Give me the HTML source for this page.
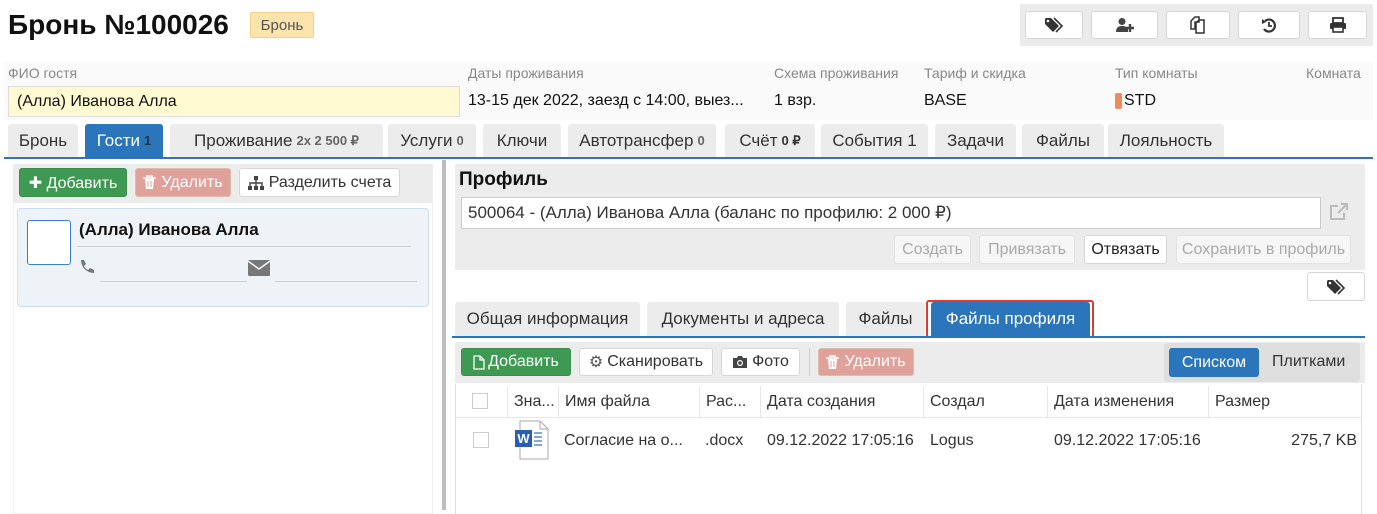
<!DOCTYPE html>
<html><head><meta charset="utf-8"><style>
*{box-sizing:border-box;margin:0;padding:0}
body{width:1377px;height:507px;overflow:hidden;background:#fff;font-family:"Liberation Sans Narrow","Liberation Sans",sans-serif;font-size:16px;color:#222;position:relative}
.a{position:absolute;white-space:nowrap;overflow:hidden}
.btn{position:absolute;border:1px solid #d6d6d6;border-radius:3px;background:#fff;display:flex;align-items:center;justify-content:center;white-space:nowrap;overflow:hidden;font-size:16px;color:#333}
.tab{position:absolute;background:#ececec;border-radius:3px 3px 0 0;display:flex;align-items:center;justify-content:center;white-space:nowrap;color:#333;font-size:17px}
.tab b{font-size:13px;color:#666;margin-left:4px}
.lbl{position:absolute;font-size:14px;color:#888;white-space:nowrap}
.val{position:absolute;font-size:16px;color:#111;white-space:nowrap}
.dis{background:#f6f6f6;color:#aaa;border-color:#e2e2e2}
.th{position:absolute;top:386px;height:32px;border-left:1px solid #e6e6e6;padding-left:6px;line-height:32px;font-size:16px;color:#333;white-space:nowrap;overflow:hidden}
.td{position:absolute;top:428px;font-size:16px;color:#333;white-space:nowrap;line-height:26px}
</style></head><body>

<div class="a" style="left:8px;top:6px;font-family:'Liberation Sans',sans-serif;font-weight:bold;font-size:28px;color:#111;line-height:38px">Бронь №100026</div>
<div class="a" style="left:250px;top:12px;width:64px;height:26px;background:#fde4ad;border:1px solid #f4cf8a;border-radius:2px;font-size:15px;color:#555;display:flex;align-items:center;justify-content:center">Бронь</div>

<div class="a" style="left:1020px;top:4px;width:353px;height:42px;background:#ebebeb;border-radius:2px"></div>
<div class="btn" style="left:1025px;top:11px;width:58px;height:28px"><svg width="20" height="16" viewBox="0 0 20 16"><path d="M1 2v5l8 8 6-6-8-8H2z" fill="#333"/><circle cx="4" cy="4" r="1.3" fill="#fff"/><path d="M10 1l8 8-6 6" fill="none" stroke="#333" stroke-width="1.6"/></svg></div>
<div class="btn" style="left:1091px;top:11px;width:67px;height:28px"><svg width="20" height="16" viewBox="0 0 20 16"><circle cx="7" cy="4.5" r="3.5" fill="#444"/><path d="M1 15c0-5 3-6 6-6s5 1 6 3v3z" fill="#444"/><path d="M15 7v8M11 11h8" stroke="#444" stroke-width="2.4"/></svg></div>
<div class="btn" style="left:1166px;top:11px;width:64px;height:28px"><svg width="16" height="18" viewBox="0 0 16 18"><path d="M1 5l4-4h4v5H5v7H1z M6 7l3-3h5v13H6z" fill="none" stroke="#333" stroke-width="1.5"/></svg></div>
<div class="btn" style="left:1238px;top:11px;width:62px;height:28px"><svg width="16" height="16" viewBox="0 0 16 16"><path d="M4 4a6 6 0 1 1-1 8" fill="none" stroke="#333" stroke-width="2.2"/><path d="M1 2l4 3-4 2z" fill="#333"/><path d="M8 5v4h3" fill="none" stroke="#333" stroke-width="1.8"/></svg></div>
<div class="btn" style="left:1308px;top:11px;width:59px;height:28px"><svg width="18" height="16" viewBox="0 0 18 16"><rect x="4" y="1" width="10" height="5" fill="none" stroke="#333" stroke-width="1.8"/><rect x="1" y="6" width="16" height="6" rx="1" fill="#333"/><rect x="4" y="10" width="10" height="5" fill="#fff" stroke="#333" stroke-width="1.6"/></svg></div>

<div class="a" style="left:4px;top:62px;width:1369px;height:58px;background:#fafafa"></div>
<div class="lbl" style="left:8px;top:65px">ФИО гостя</div>
<div class="lbl" style="left:468px;top:65px">Даты проживания</div>
<div class="lbl" style="left:774px;top:65px">Схема проживания</div>
<div class="lbl" style="left:924px;top:65px">Тариф и скидка</div>
<div class="lbl" style="left:1115px;top:65px">Тип комнаты</div>
<div class="lbl" style="left:1306px;top:65px">Комната</div>
<div class="a" style="left:8px;top:86px;width:452px;height:31px;background:#fffad1;border:1px solid #ddd;padding-left:8px;line-height:30px;font-size:16px;color:#111">(Алла) Иванова Алла</div>
<div class="val" style="left:468px;top:92px;width:290px;overflow:hidden">13-15 дек 2022, заезд с 14:00, выез...</div>
<div class="val" style="left:774px;top:92px">1 взр.</div>
<div class="val" style="left:924px;top:92px">BASE</div>
<div class="a" style="left:1115px;top:93px;width:7px;height:16px;background:#ef8a5c;border-radius:2px"></div>
<div class="val" style="left:1124px;top:92px">STD</div>

<div class="tab" style="left:8px;top:124px;width:70px;height:33px">Бронь</div>
<div class="tab" style="left:85px;top:124px;width:78px;height:33px;background:#2b75bb;color:#fff">Гости<b style="color:#234">1</b></div>
<div class="tab" style="left:170px;top:124px;width:213px;height:33px">Проживание<b>2x 2 500 ₽</b></div>
<div class="tab" style="left:388px;top:124px;width:88px;height:33px">Услуги<b>0</b></div>
<div class="tab" style="left:483px;top:124px;width:78px;height:33px">Ключи</div>
<div class="tab" style="left:568px;top:124px;width:148px;height:33px">Автотрансфер<b>0</b></div>
<div class="tab" style="left:725px;top:124px;width:90px;height:33px">Счёт<b style="color:#333">0 ₽</b></div>
<div class="tab" style="left:821px;top:124px;width:107px;height:33px">События 1</div>
<div class="tab" style="left:935px;top:124px;width:81px;height:33px">Задачи</div>
<div class="tab" style="left:1022px;top:124px;width:82px;height:33px">Файлы</div>
<div class="tab" style="left:1108px;top:124px;width:116px;height:33px">Лояльность</div>
<div class="a" style="left:4px;top:157px;width:1369px;height:2px;background:#2b75bb"></div>

<!-- left panel -->
<div class="a" style="left:13px;top:164px;width:420px;height:350px;border:1px solid #eee;background:#fff"></div>
<div class="a" style="left:13px;top:164px;width:420px;height:39px;background:#ececec"></div>
<div class="btn" style="left:19px;top:168px;width:108px;height:29px;background:#3e9a52;border-color:#3a8e4c;color:#fff">✚&nbsp;Добавить</div>
<div class="btn" style="left:135px;top:168px;width:96px;height:29px;background:#e0a19b;border-color:#dba;color:#fff"><svg width="13" height="15" viewBox="0 0 13 15" style="margin-right:5px"><path d="M0 3h13M4 3V1h5v2" fill="none" stroke="#fff" stroke-width="1.5"/><path d="M2 4h9l-1 10H3z" fill="#fff"/><path d="M5 6v6M8 6v6" stroke="#e0a19b" stroke-width="1"/></svg>Удалить</div>
<div class="btn" style="left:239px;top:168px;width:161px;height:29px"><svg width="16" height="14" viewBox="0 0 16 14" style="margin-right:5px"><rect x="6" y="0" width="4" height="4" fill="#444"/><rect x="0" y="10" width="4" height="4" fill="#444"/><rect x="6" y="10" width="4" height="4" fill="#444"/><rect x="12" y="10" width="4" height="4" fill="#444"/><path d="M8 4v6M2 10V7h12v3" fill="none" stroke="#444" stroke-width="1.4"/></svg>Разделить счета</div>
<div class="a" style="left:17px;top:208px;width:412px;height:99px;background:#eef3f8;border:1px solid #cfdeed;border-radius:4px"></div>
<div class="a" style="left:27px;top:220px;width:44px;height:45px;background:#fff;border:1px solid #3c7fc4;border-radius:3px"></div>
<div class="a" style="left:79px;top:220px;font-family:'Liberation Sans',sans-serif;font-weight:bold;font-size:17px;color:#111">(Алла) Иванова Алла</div>
<div class="a" style="left:77px;top:246px;width:334px;height:1px;background:#c8cfd6"></div>
<svg class="a" style="left:79px;top:259px" width="16" height="16" viewBox="0 0 16 16"><path d="M2 1l3 0 2 4-2 2c1 2 2 3 4 4l2-2 4 2v3c-7 0-13-6-13-13z" fill="#777"/></svg>
<div class="a" style="left:100px;top:281px;width:147px;height:1px;background:#c8cfd6"></div>
<svg class="a" style="left:248px;top:260px" width="22" height="16" viewBox="0 0 22 16"><rect x="0" y="0" width="22" height="16" rx="1" fill="#777"/><path d="M0 1l11 8 11-8" fill="none" stroke="#eef3f8" stroke-width="1.6"/></svg>
<div class="a" style="left:275px;top:281px;width:142px;height:1px;background:#c8cfd6"></div>

<div class="a" style="left:442px;top:160px;width:4px;height:350px;background:#bdbdbd"></div>

<!-- right -->
<div class="a" style="left:455px;top:164px;width:910px;height:106px;background:#ececec"></div>
<div class="a" style="left:459px;top:168px;font-weight:bold;font-size:19px;color:#111;line-height:24px">Профиль</div>
<div class="a" style="left:461px;top:197px;width:860px;height:32px;background:#fff;border:1px solid #ccc;padding-left:6px;line-height:30px;font-size:17px;color:#333">500064 - (Алла) Иванова Алла (баланс по профилю: 2 000 ₽)</div>
<svg class="a" style="left:1329px;top:203px" width="20" height="18" viewBox="0 0 20 18"><path d="M9 3H2v13h13V10" fill="none" stroke="#bbb" stroke-width="2"/><path d="M12 1h6v6M18 1l-9 9" fill="none" stroke="#bbb" stroke-width="2"/></svg>
<div class="btn dis" style="left:894px;top:235px;width:77px;height:29px">Создать</div>
<div class="btn dis" style="left:979px;top:235px;width:96px;height:29px">Привязать</div>
<div class="btn" style="left:1084px;top:235px;width:83px;height:29px;color:#222">Отвязать</div>
<div class="btn dis" style="left:1176px;top:235px;width:175px;height:29px">Сохранить в профиль</div>
<div class="btn" style="left:1307px;top:272px;width:58px;height:29px"><svg width="20" height="16" viewBox="0 0 20 16"><path d="M1 2v5l8 8 6-6-8-8H2z" fill="#333"/><circle cx="4" cy="4" r="1.3" fill="#fff"/><path d="M10 1l8 8-6 6" fill="none" stroke="#333" stroke-width="1.6"/></svg></div>

<div class="tab" style="left:455px;top:302px;width:185px;height:34px">Общая информация</div>
<div class="tab" style="left:647px;top:302px;width:192px;height:34px">Документы и адреса</div>
<div class="tab" style="left:846px;top:302px;width:79px;height:34px">Файлы</div>
<div class="a" style="left:926px;top:300px;width:168px;height:38px;border:2px solid #e03a32;border-radius:3px"></div>
<div class="tab" style="left:931px;top:302px;width:159px;height:34px;background:#2b75bb;color:#fff">Файлы профиля</div>
<div class="a" style="left:452px;top:336px;width:913px;height:2px;background:#2b75bb"></div>

<div class="a" style="left:455px;top:342px;width:910px;height:41px;background:#ececec"></div>
<div class="btn" style="left:461px;top:348px;width:110px;height:28px;background:#3e9a52;border-color:#3a8e4c;color:#fff"><svg width="12" height="15" viewBox="0 0 12 15" style="margin-right:3px"><path d="M1 1h6l4 4v9H1z M7 1v4h4" fill="none" stroke="#fff" stroke-width="1.3"/></svg>Добавить</div>
<div class="btn" style="left:579px;top:348px;width:134px;height:28px"><span style="color:#555;margin-right:4px">⚙</span>Сканировать</div>
<div class="btn" style="left:721px;top:348px;width:79px;height:28px"><svg width="16" height="14" viewBox="0 0 16 14" style="margin-right:4px"><path d="M1 3h4l1-2h4l1 2h4v10H1z" fill="#444"/><circle cx="8" cy="8" r="3" fill="#fff"/><circle cx="8" cy="8" r="1.8" fill="#444"/></svg>Фото</div>
<div class="a" style="left:809px;top:348px;width:1px;height:28px;background:#ccc"></div>
<div class="btn" style="left:818px;top:348px;width:96px;height:28px;background:#e0a19b;border-color:#dba;color:#fff"><svg width="13" height="15" viewBox="0 0 13 15" style="margin-right:5px"><path d="M0 3h13M4 3V1h5v2" fill="none" stroke="#fff" stroke-width="1.5"/><path d="M2 4h9l-1 10H3z" fill="#fff"/><path d="M5 6v6M8 6v6" stroke="#e0a19b" stroke-width="1"/></svg>Удалить</div>
<div class="a" style="left:1164px;top:343px;width:196px;height:39px;background:#dedede;border-radius:3px"></div>
<div class="btn" style="left:1169px;top:348px;width:90px;height:29px;background:#2b75bb;border-color:#2b75bb;color:#fff">Списком</div>
<div class="a" style="left:1272px;top:353px;font-size:16px;color:#333">Плитками</div>

<div class="a" style="left:455px;top:384px;width:907px;height:130px;border-left:1px solid #ddd;border-right:1px solid #ddd"></div>
<div class="a" style="left:455px;top:417px;width:907px;height:1px;background:#e6e6e6"></div>
<div class="a" style="left:472px;top:393px;width:16px;height:16px;border:1px solid #ccc;background:#fff"></div>
<div class="th" style="left:507px;width:51px">Зна...</div>
<div class="th" style="left:558px;width:141px">Имя файла</div>
<div class="th" style="left:699px;width:61px">Рас...</div>
<div class="th" style="left:760px;width:163px">Дата создания</div>
<div class="th" style="left:923px;width:124px">Создал</div>
<div class="th" style="left:1047px;width:161px">Дата изменения</div>
<div class="th" style="left:1208px;width:154px">Размер</div>
<div class="a" style="left:473px;top:432px;width:16px;height:16px;border:1px solid #ccc;background:#fff"></div>
<svg class="a" style="left:514px;top:420px" width="36" height="40" viewBox="0 0 36 40"><path d="M6 1h20l8 8v30H6z" fill="#fff" stroke="#aaa"/><path d="M26 1v8h8" fill="none" stroke="#aaa"/><rect x="1" y="10" width="17" height="17" fill="#2a5eb5"/><text x="9.5" y="23" font-family="Liberation Sans,sans-serif" font-weight="bold" font-size="13" fill="#fff" text-anchor="middle">W</text><path d="M20 13h8M20 17h8M20 21h8M20 25h8" stroke="#5a8ad6" stroke-width="1.5"/></svg>
<div class="td" style="left:564px;width:130px;overflow:hidden">Согласие на о...</div>
<div class="td" style="left:705px">.docx</div>
<div class="td" style="left:767px">09.12.2022 17:05:16</div>
<div class="td" style="left:930px">Logus</div>
<div class="td" style="left:1054px">09.12.2022 17:05:16</div>
<div class="td" style="left:1260px;width:97px;text-align:right">275,7 KB</div>
</body></html>
